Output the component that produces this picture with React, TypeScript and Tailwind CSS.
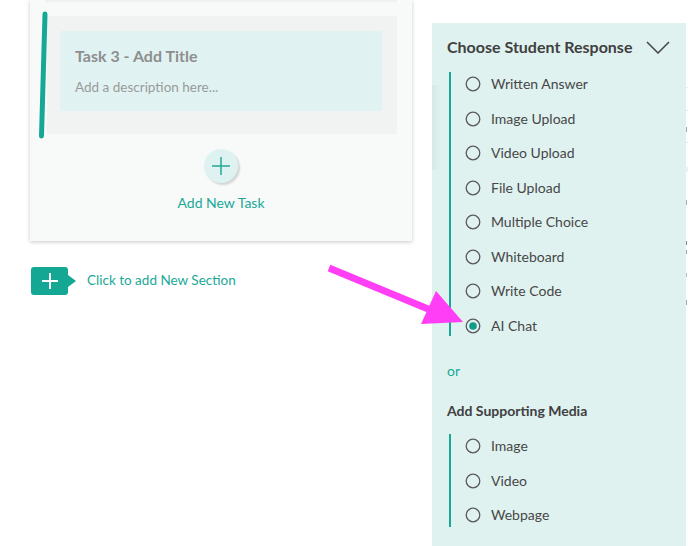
import React from "react";

function Radio({ checked = false }: { checked?: boolean }) {
  return (
    <svg width="16" height="16" viewBox="0 0 16 16" className="shrink-0">
      <circle cx="8" cy="8" r="6.8" fill="none" stroke="#5a5a5a" strokeWidth="1.3" />
      {checked && <circle cx="8" cy="8" r="3.8" fill="#109c88" />}
    </svg>
  );
}

function OptionList({ items, checkedIndex = -1, lineTop, lineBottom }: { items: string[]; checkedIndex?: number; lineTop: number; lineBottom: number }) {
  return (
    <div className="flex">
      <div className="w-[2px] bg-[#1aa896] ml-[2px]" style={{ marginTop: lineTop, marginBottom: lineBottom }} />
      <div className="flex flex-col ml-[14px]">
        {items.map((t, i) => (
          <div key={t} className="h-[34.5px] flex items-center gap-[10px]">
            <Radio checked={i === checkedIndex} />
            <span className="text-[14px] text-[#474747] leading-none">{t}</span>
          </div>
        ))}
      </div>
    </div>
  );
}

export default function App() {
  return (
    <div
      className="relative w-[688px] h-[546px] overflow-hidden bg-white flex"
      style={{ fontFamily: "Lato, 'Open Sans', sans-serif" }}
    >
      {/* Left column */}
      <div className="w-[432px] shrink-0 flex flex-col">
        <div className="ml-[30px] w-[382px] bg-[#f8fafa] shadow-[0_1px_4px_rgba(0,0,0,0.22)] flex flex-col">
          <div className="mx-[15px] h-[2px] bg-[#eef1f0]" />
          <div className="relative mt-[14px] ml-[17px] mr-[15px] h-[118px] bg-[#f1f3f2] pt-[15px] pl-[13px] pr-[15px]">
            <div className="h-[80px] bg-[#e0f3f2] pl-[15px] pt-[14px]">
              <div className="text-[16px] font-bold text-[#8e8e8e] leading-[22px]">Task 3 - Add Title</div>
              <div className="mt-[11px] text-[13.5px] text-[#9a9a9a] leading-[18px]">Add a description here...</div>
            </div>
            <svg className="absolute left-[-8px] top-[-5px]" width="10" height="128" viewBox="0 0 10 128">
              <line x1="6" y1="3" x2="2.5" y2="125" stroke="#16a896" strokeWidth="5" strokeLinecap="round" />
            </svg>
          </div>
          <div className="mt-[15px] self-center w-[34px] h-[34px] rounded-full bg-[#ddf2f1] shadow-[2px_2px_2px_rgba(0,0,0,0.15)] flex items-center justify-center">
            <svg width="20" height="20" viewBox="0 0 20 20">
              <line x1="10" y1="1" x2="10" y2="19" stroke="#27a797" strokeWidth="1.5" />
              <line x1="1" y1="10" x2="19" y2="10" stroke="#27a797" strokeWidth="1.5" />
            </svg>
          </div>
          <div className="mt-[10px] mb-[28px] text-center text-[14px] leading-[20px] text-[#1aa897]">Add New Task</div>
        </div>

        <div className="mt-[26px] ml-[31px] flex items-center">
          <div className="relative w-[37px] h-[28px] rounded-[3px] bg-[#14a794] flex items-center justify-center">
            <svg width="18" height="18" viewBox="0 0 18 18">
              <line x1="9" y1="1" x2="9" y2="17" stroke="white" strokeWidth="2" />
              <line x1="1" y1="9" x2="17" y2="9" stroke="white" strokeWidth="2" />
            </svg>
            <div className="absolute right-[-8px] top-[8px] w-0 h-0 border-y-[6px] border-y-transparent border-l-[8px] border-l-[#14a794]" />
          </div>
          <span className="ml-[19px] text-[13.5px] leading-[20px] text-[#1aa897] -translate-y-[1px]">Click to add New Section</span>
        </div>
      </div>

      {/* Right panel */}
      <div className="relative mt-[23px] w-[254px] shrink-0 h-[523px] bg-[#dff2f0] pl-[15px] pt-[13px]">
        <div className="absolute left-0 top-[62px] w-[8px] h-[85px] bg-gradient-to-r from-[rgba(0,0,0,0.04)] to-transparent" />
        <div className="flex items-center justify-between pr-[16px] h-[22px]">
          <span className="text-[16px] font-bold text-[#404040]">Choose Student Response</span>
          <svg width="24" height="13" viewBox="0 0 24 13">
            <polyline points="1,1 12,12 23,1" fill="none" stroke="#444" strokeWidth="1.5" />
          </svg>
        </div>
        <div className="mt-[9px]">
          <OptionList
            items={["Written Answer", "Image Upload", "Video Upload", "File Upload", "Multiple Choice", "Whiteboard", "Write Code", "AI Chat"]}
            checkedIndex={7}
            lineTop={5}
            lineBottom={7}
          />
        </div>
        <div className="mt-[18px] text-[14px] leading-[20px] text-[#1aa897]">or</div>
        <div className="mt-[20px] text-[14px] leading-[20px] font-bold text-[#404040]">Add Supporting Media</div>
        <div className="mt-[8px]">
          <OptionList items={["Image", "Video", "Webpage"]} lineTop={5} lineBottom={6} />
        </div>
      </div>

      {/* Fragments at right edge */}
      <div className="relative w-[2px] shrink-0">
        <div className="absolute left-0 top-[87px] w-[2px] h-[1px] bg-[#ececec]" />
        <div className="absolute left-0 top-[110px] w-[2px] h-[1px] bg-[#e6e6e6]" />
        <div className="absolute left-0 top-[127px] w-[1px] h-[5px] bg-[#aaa]" />
        <div className="absolute left-0 top-[142px] w-[2px] h-[1px] bg-[#e6e6e6]" />
        <div className="absolute left-0 top-[167px] w-[2px] h-[5px] bg-[#f0f0f0]" />
        <div className="absolute left-0 top-[200px] w-[1px] h-[5px] bg-[#aaa]" />
        <div className="absolute left-0 top-[241px] w-[1px] h-[4px] bg-[#888]" />
        <div className="absolute left-0 top-[250px] w-[1px] h-[4px] bg-[#aaa]" />
        <div className="absolute left-0 top-[273px] w-[1px] h-[4px] bg-[#bbb]" />
        <div className="absolute left-0 top-[300px] w-[1px] h-[5px] bg-[#aaa]" />
      </div>

      {/* Annotation arrow */}
      <svg className="absolute left-0 top-0 pointer-events-none" width="688" height="546" viewBox="0 0 688 546">
        <line x1="329" y1="268" x2="433" y2="311" stroke="#ff3ef5" strokeWidth="7" />
        <polygon points="463,322 421,324 436,291" fill="#ff3ef5" />
      </svg>
    </div>
  );
}
